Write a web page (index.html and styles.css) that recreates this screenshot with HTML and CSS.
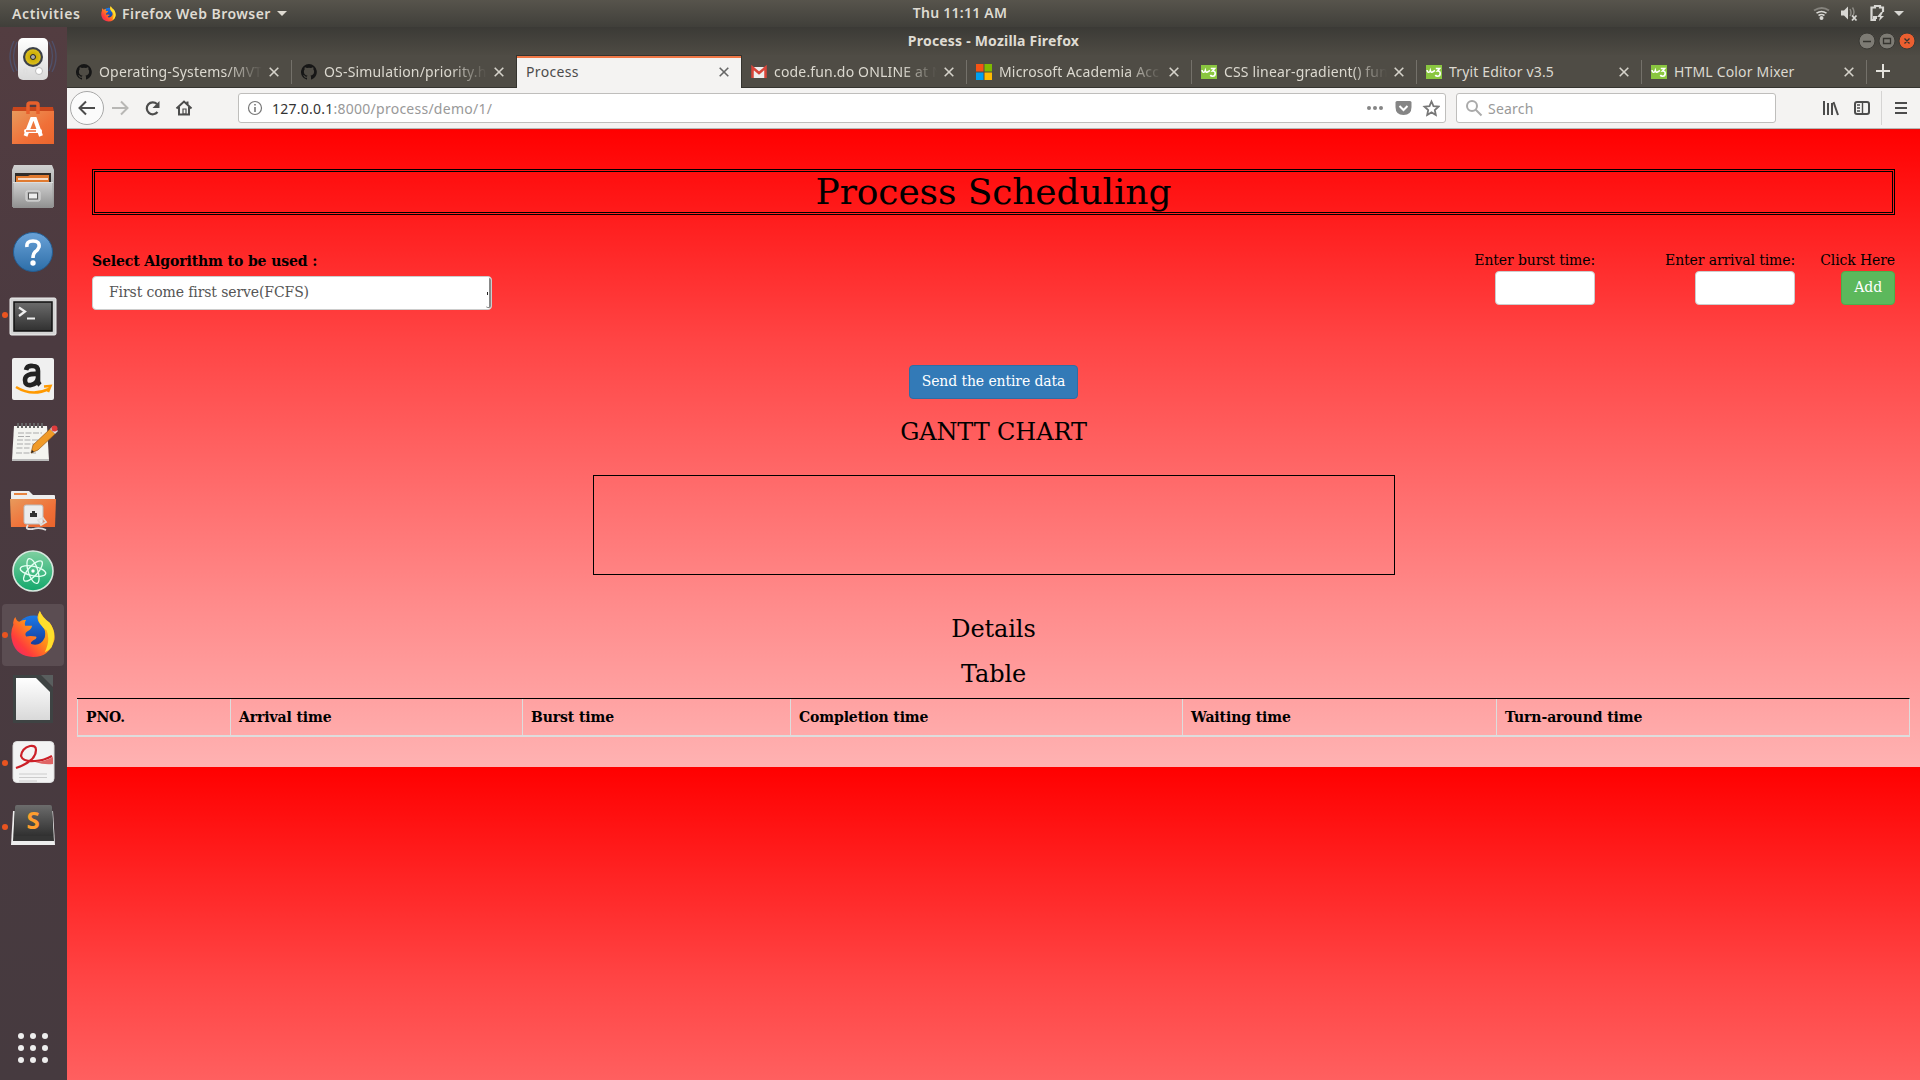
FILE: index.html
```html
<!DOCTYPE html>
<html lang="en">
<head>
<meta charset="utf-8">
<title>Process - Mozilla Firefox</title>
<link rel="stylesheet" href="styles.css">
</head>
<body>
<svg class="defs" width="0" height="0">
  <defs>
    <linearGradient id="white" x1="0" y1="0" x2="0" y2="1"><stop offset="0" stop-color="#fff"/><stop offset="1" stop-color="#d9d9d9"/></linearGradient>
    <linearGradient id="orange" x1="0" y1="0" x2="1" y2="1"><stop offset="0" stop-color="#e89a5c"/><stop offset=".6" stop-color="#f07038"/><stop offset="1" stop-color="#ea642c"/></linearGradient>
    <linearGradient id="grey" x1="0" y1="0" x2="0" y2="1"><stop offset="0" stop-color="#d0d0d0"/><stop offset="1" stop-color="#909090"/></linearGradient>
    <linearGradient id="blue" x1="0" y1="0" x2="0" y2="1"><stop offset="0" stop-color="#6aa2d8"/><stop offset="1" stop-color="#2d6ea8"/></linearGradient>
    <linearGradient id="dark" x1="0" y1="0" x2="0" y2="1"><stop offset="0" stop-color="#6c6c6c"/><stop offset="1" stop-color="#303030"/></linearGradient>
    <linearGradient id="green" x1="0" y1="0" x2="0" y2="1"><stop offset="0" stop-color="#7fd0a0"/><stop offset="1" stop-color="#12a86c"/></linearGradient>
    <linearGradient id="flame" x1="1" y1="0" x2="0" y2="1"><stop offset="0" stop-color="#ffe030"/><stop offset=".45" stop-color="#ff9018"/><stop offset=".75" stop-color="#ff3c3c"/><stop offset="1" stop-color="#e8207c"/></linearGradient>
    <linearGradient id="globe" x1="0" y1="0" x2="0" y2="1"><stop offset="0" stop-color="#1b7ae8"/><stop offset="1" stop-color="#152a84"/></linearGradient>
    <radialGradient id="cone"><stop offset="0" stop-color="#555"/><stop offset=".25" stop-color="#333"/><stop offset=".3" stop-color="#c8a800"/><stop offset="1" stop-color="#dcc020"/></radialGradient>
    <symbol id="firefox" viewBox="0 0 46 48">
      <circle cx="24" cy="24" r="19.500" fill="url(#globe)"/>
      <path d="M5 6Q6 10 9 11Q12 9 16 9Q14 12 15 15Q18 15 22 15Q22 18 17 21Q14 23 16 26Q20 25 26 26Q28 28 23 30Q19 33 22 34Q31 36 35 27Q37 18 30 13Q25 7 30 0Q33 7 40 12Q46 20 45 29Q40 47 23 47Q6 46 2 32Q-1 22 3 14Q2 9 5 6z" fill="url(#flame)"/>
      <path d="M30 0Q32 7 40 12Q48 23 42 37Q39 41 35 42Q41 30 37 20Q25 12 30 0z" fill="#ffdf2c"/>
    </symbol>
    <symbol id="github" viewBox="0 0 16 16"><path fill="#161616" d="M8 0a8 8 0 0 0-2.5 15.6c.4.1.5-.2.5-.4v-1.5c-2.200.5-2.700-1-2.700-1-.4-.9-.9-1.200-.9-1.200-.7-.5.1-.5.1-.5.8.1 1.200.8 1.200.8.7 1.300 1.900.9 2.300.7.1-.5.3-.9.5-1.100-1.800-.2-3.600-.9-3.600-4 0-.8.3-1.600.8-2.100-.1-.2-.4-1 .1-2.100 0 0 .7-.2 2.200.8a7.500 7.500 0 0 1 4 0c1.500-1 2.200-.8 2.200-.8.4 1.100.2 1.900.1 2.100.5.6.8 1.300.8 2.100 0 3.100-1.900 3.800-3.700 4 .3.300.6.8.6 1.500v2.200c0 .2.1.5.6.4A8 8 0 0 0 8 0z"/></symbol>
    <symbol id="w3" viewBox="0 0 16 14"><path fill="#8ac640" d="M0 0h16v14H0z"/><path d="M1 5Q1.500 8.500 4 6.500L4.300 5.500Q5 8.500 7.500 6.300L9 5.500" fill="none" stroke="#fff" stroke-width="1.600"/><path d="M9.800 3.500h3.800L11.500 6q2.700-.2 2.700 2.500 0 2.700-2.700 2.700-1.500 0-2.200-1.200" fill="none" stroke="#fff" stroke-width="1.600"/></symbol>
    <symbol id="close" viewBox="0 0 10 10"><path d="M.7.7l8.600 8.600M9.300.7L.7 9.300" fill="none" stroke="currentColor" stroke-width="1.600"/></symbol>
  </defs>
</svg>

<header class="panel">
  <span class="activities">Activities</span>
  <span class="app-menu"><svg width="15" height="16"><use href="#firefox"/></svg><b>Firefox Web Browser</b><i class="caret"></i></span>
  <span class="clock">Thu 11:11 AM</span>
  <svg class="status" width="100" height="27" fill="#d8d7d3">
    <g fill="none" stroke="#d8d7d3" stroke-width="2"><path d="M5 10.500q8-5 15 0" stroke="#85837d"/><path d="M7.500 13.200q5-3.500 10 0M9.500 15.500q3-2 6 0" stroke-width="1.600"/></g><circle cx="12.500" cy="18" r="2"/>
    <path d="M32 10.500h3l4-4v13l-4-4h-3z"/><path d="M41 9q2 4 0 7M43.500 7.500q3 4.500 0 9" fill="none" stroke="#8d8b85" stroke-width="1.400"/><path d="M43 15.500l4.500 5m0-5l-4.500 5" stroke="#d8d7d3" stroke-width="1.800"/>
    <path d="M67 20h-4.500V7.500H66V6h5v1.500h3V12" fill="none" stroke="#d8d7d3" stroke-width="2.200"/><path d="M64 16h4v3h-4zM72 12l-4 5h3l-1 4 5-5h-3l2-4z"/>
    <path d="M85 11h10l-5 5z"/>
  </svg>
</header>

<div class="desktop">
  <nav class="dock">
    <div class="slot"><svg width="67" height="64"><g fill="none" stroke="#4d618b" stroke-width="1.300" opacity=".55"><path d="M17 15q-7 14 0 29M14 14q-8 16 0 31M49 15q7 14 0 29M52 14q8 16 0 31"/></g><rect x="18" y="11" width="30" height="42" rx="5" fill="url(#white)"/><circle cx="33" cy="30" r="10" fill="#3c4048"/><circle cx="33" cy="30" r="7.800" fill="url(#cone)"/><circle cx="33" cy="30" r="2.500" fill="#aaa" stroke="#222" stroke-width="1"/><circle cx="39" cy="44" r="3.500" fill="#fff" stroke="#bbb"/><path d="M24 42h3v5h-3z" fill="none" stroke="#ddd"/></svg></div>
    <div class="slot"><svg width="67" height="64"><path d="M13 16h40l1 5H12z" fill="#c9461c"/><path d="M12 20h42v33H12z" fill="url(#orange)"/><path d="M28 23V14q0-2 2-2h6q2 0 2 2v9" fill="none" stroke="#e8602c" stroke-width="3.500"/><path d="M25.500 45l6.500-17h3l6 17" fill="none" stroke="#fff" stroke-width="4"/><rect x="24" y="38" width="18" height="4" rx="2" fill="#fff"/><path d="M26 40h10" stroke="#ee6a34" stroke-width="1.500"/></svg></div>
    <div class="slot"><svg width="67" height="64"><path d="M14 10h38l2 5v37H12V15z" fill="url(#grey)"/><path d="M15 18h36v9H15z" fill="#302c2a"/><path d="M16 21h12l2-1h19v7H16z" fill="#e07a30"/><path d="M18 24h30" stroke="#fff" stroke-width="1.500"/><path d="M14 27h38l1 26H13z" fill="url(#grey)"/><path d="M13 27.500h40" stroke="#ddd"/><rect x="26" y="36" width="14" height="10" rx="1.500" fill="#bbb" stroke="#ddd"/><rect x="28.500" y="38" width="9" height="6" fill="#eee" stroke="#555"/></svg></div>
    <div class="slot"><svg width="67" height="64"><circle cx="33" cy="33" r="19.500" fill="url(#blue)" stroke="#245d92"/><path d="M27 28q-1-6 6-6 7 0 6 6-1 3-4 5-2 2-2 6" fill="none" stroke="#fff" stroke-width="3.600"/><circle cx="33" cy="44" r="2.700" fill="#fff"/></svg></div>
    <div class="slot"><i class="running"></i><svg width="67" height="64"><rect x="10" y="15" width="46" height="37" rx="1.500" fill="#d4d4d4" stroke="#eee"/><rect x="14" y="19" width="38" height="29" fill="url(#dark)" stroke="#111" stroke-width="1.500"/><path d="M19 24.500l6 4-6 4.500M27 35.500h8" fill="none" stroke="#eee" stroke-width="2.200"/></svg></div>
    <div class="slot"><svg width="67" height="64"><rect x="12" y="11" width="42" height="42" rx="2" fill="#f0f0f0"/><path d="M26 23q1-5 7-4 5 0 5 5v10q0 2 2 4M38 27q-13-1-13 6 0 6 6 5 6-1 7-7" fill="none" stroke="#222" stroke-width="4.600"/><path d="M16 40q16 10 33 2M44 39.500l6.500-.5-2.500 6" fill="none" stroke="#ff9900" stroke-width="2.500"/></svg></div>
    <div class="slot"><svg width="67" height="64"><path d="M14 15h33l2 34H12z" fill="#f4f4f0"/><path d="M12 48h37v2H12z" fill="#bbb"/><path d="M18 12v5m4-5v5m4-5v5m4-5v5m4-5v5m4-5v5m4-5v5" stroke="#666" stroke-width="2"/><path d="M18 22h24M18 25.500h12M17 29h22M17 33h18M16.500 37h13M16 42h20" stroke="#aaa" stroke-dasharray="6 1.500"/><path d="M31 42l2-8 17-16 5 5-17 16z" fill="#f09a28" stroke="#9a5a18" stroke-width=".7"/><path d="M50 18l3-3 5 5-3 3z" fill="#ddd"/><circle cx="54.500" cy="17.500" r="3" fill="#e03c3c"/><path d="M31 42l1-3 2 2z" fill="#222"/></svg></div>
    <div class="slot"><svg width="67" height="64"><path d="M11 25V17q0-1 1-1h17l4 4h21q1 0 1 1v5z" fill="#eee"/><path d="M14 19h13" stroke="#e88440" stroke-width="2"/><path d="M10 24h46l-1 28H11z" fill="url(#orange)"/><rect x="24" y="30" width="19" height="19" rx="2" fill="#ececec" stroke="#bbb"/><path d="M30 42v-4h2v-2h3v2h2v4z" fill="#333"/><path d="M28 50q-4 5 5 4 7-2 13 1M38 45l5-2 3 4-5 3z" fill="none" stroke="#ddd" stroke-width="1.800"/></svg></div>
    <div class="slot"><svg width="67" height="64"><circle cx="33" cy="32" r="20" fill="url(#green)" stroke="#d8e8df" stroke-width="1.600"/><g fill="none" stroke="#e4fff2" stroke-width="1.300"><ellipse cx="33" cy="32" rx="13" ry="4.800" transform="rotate(12 33 32)"/><ellipse cx="33" cy="32" rx="13" ry="4.800" transform="rotate(72 33 32)"/><ellipse cx="33" cy="32" rx="13" ry="4.800" transform="rotate(132 33 32)"/></g><circle cx="33" cy="32" r="1.700" fill="#fff"/></svg></div>
    <div class="slot active"><i class="running"></i><svg width="67" height="64"><use href="#firefox" x="10" y="8" width="46" height="47"/></svg></div>
    <div class="slot"><svg width="67" height="64"><path d="M13 8h28l12 13v35H13z" fill="#3e4343"/><path d="M41 8h12v12z" fill="#595e5e"/><path d="M16 11h20l14 14v28H16z" fill="url(#white)"/></svg></div>
    <div class="slot"><i class="running"></i><svg width="67" height="64"><rect x="13" y="10.500" width="41" height="41" rx="4" fill="#f3f3f3" stroke="#ddd"/><path d="M16 37q20-7 20-18 0-5-6-4-8 2-9 10 2 6 14 5 8 0 17-5" fill="none" stroke="#cc2028" stroke-width="2.200"/><path d="M35 31q9 0 18-5v7q-9 1-18-2z" fill="#e06464"/><path d="M19 43h28M19 46.500h28M19 50h18" stroke="#ccc"/></svg></div>
    <div class="slot"><i class="running"></i><svg width="67" height="64"><path d="M13 16h40l2 34H11z" fill="#eee"/><path d="M15 11h37l2 35H13z" fill="#353535"/><path d="M15 12q0-2 2-2h33q2 0 2 2l1 29H14z" fill="url(#dark)"/><text x="33" y="34" class="sublime">S</text></svg></div>
    <div class="apps"><i></i><i></i><i></i><i></i><i></i><i></i><i></i><i></i><i></i></div>
  </nav>

  <main class="window">
    <div class="titlebar">
      <span class="title">Process - Mozilla Firefox</span>
      <svg class="controls" width="60" height="20"><g stroke="#3a3934"><circle cx="10" cy="10" r="8" fill="#7d7b74"/><circle cx="30" cy="10" r="8" fill="#7d7b74"/><circle cx="50" cy="10" r="8" fill="#ec5f30"/></g><path d="M6 10.500h8M26.500 7.500h7v5h-7zM47.500 7.500l5 5m0-5l-5 5" fill="none" stroke="#35342f" stroke-width="1.300"/></svg>
    </div>
    <div class="tabs">
      <div class="tab"><svg width="16" height="16"><use href="#github"/></svg><span class="fade">Operating-Systems/MVT</span><svg class="x" width="10" height="10"><use href="#close"/></svg></div>
      <div class="tab nosep"><svg width="16" height="16"><use href="#github"/></svg><span class="fade">OS-Simulation/priority.h</span><svg class="x" width="10" height="10"><use href="#close"/></svg></div>
      <div class="tab current nosep"><span>Process</span><svg class="x" width="10" height="10"><use href="#close"/></svg></div>
      <div class="tab"><svg width="16" height="16" viewBox="0 0 16 16"><path d="M1 3h14v11H1z" fill="#eee"/><path d="M1.500 14V3.500L8 9l6.500-5.500V14" fill="none" stroke="#d8453a" stroke-width="2.500"/></svg><span class="fade">code.fun.do ONLINE at N</span><svg class="x" width="10" height="10"><use href="#close"/></svg></div>
      <div class="tab"><svg width="16" height="16"><path fill="#f65314" d="M0 0h7.500v7.500H0z"/><path fill="#7fba00" d="M8.500 0H16v7.500H8.500z"/><path fill="#00a1f1" d="M0 8.500h7.500V16H0z"/><path fill="#ffbb00" d="M8.500 8.500H16V16H8.500z"/></svg><span class="fade">Microsoft Academia Acc</span><svg class="x" width="10" height="10"><use href="#close"/></svg></div>
      <div class="tab"><svg width="16" height="14"><use href="#w3"/></svg><span class="fade">CSS linear-gradient() fun</span><svg class="x" width="10" height="10"><use href="#close"/></svg></div>
      <div class="tab"><svg width="16" height="14"><use href="#w3"/></svg><span>Tryit Editor v3.5</span><svg class="x" width="10" height="10"><use href="#close"/></svg></div>
      <div class="tab"><svg width="16" height="14"><use href="#w3"/></svg><span>HTML Color Mixer</span><svg class="x" width="10" height="10"><use href="#close"/></svg></div>
      <svg class="plus" width="14" height="14"><path d="M7 0v14M0 7h14" stroke="#e4e2dc" stroke-width="2"/></svg>
    </div>
    <div class="toolbar">
      <svg class="buttons" width="171" height="40" fill="none" stroke="#4c4c4c" stroke-width="2"><circle cx="20" cy="20" r="16.500" fill="#fbfbfb" stroke="#a8a8a8" stroke-width="1"/><path d="M28 20H13m6-6.500L12.500 20l6.500 6.500"/><path d="M45 20h15m-6-6.500l6.500 6.500-6.500 6.500" stroke="#b8b7b5"/><path d="M90.500 24a6 6 0 1 1-.5-8" stroke-width="2.200"/><path d="M92.500 13v7h-7z" fill="#4c4c4c" stroke="none"/><path d="M109.500 20.500l7.500-7 7.500 7M112 19v7.500h10V19M120.500 13.500v3"/><path d="M116 21h3v5h-3z" stroke-width="1.200"/></svg>
      <div class="field url"><svg width="16" height="16" fill="none" stroke="#777"><circle cx="8" cy="8" r="6.500" stroke-width="1.200"/><path d="M8 7v5M8 4v1.600" stroke-width="1.600"/></svg><span class="address">127.0.0.1<em>:8000/process/demo/1/</em></span>
        <svg width="74" height="20"><g fill="#858585"><circle cx="3" cy="10" r="2"/><circle cx="9" cy="10" r="2"/><circle cx="15" cy="10" r="2"/><path d="M31 3h13q1.500 0 1.500 1.500V9q0 8-8 8t-8-8V4.500Q29.500 3 31 3z"/></g><path d="M33.500 8l4 4 4-4" fill="none" stroke="#fff" stroke-width="2"/><path d="M65.500 3.500l2 4.600 5 .5-3.700 3.400 1 5-4.300-2.600-4.300 2.600 1-5-3.700-3.400 5-.5z" fill="none" stroke="#777" stroke-width="1.800"/></svg></div>
      <div class="field search"><svg width="18" height="18" fill="none" stroke="#aaa" stroke-width="2"><circle cx="7" cy="7" r="5"/><path d="M10.500 10.500l6 6"/></svg><span>Search</span></div>
      <svg class="tools" width="100" height="40" fill="none" stroke="#4c4c4c" stroke-width="2"><path d="M4 13v14M8 15v12M12 15v12M13.500 14l4.500 13"/><rect x="35" y="14" width="14" height="12" rx="2"/><path d="M42.500 14v12M37 17h3M37 20h3M37 23h3" stroke-width="1.400"/><path d="M61.500 3v34" stroke="#d5d4d3" stroke-width="1"/><path d="M75 15h12M75 20h12M75 25h12"/></svg>
    </div>

    <section class="page">
      <div class="content">
        <h1>Process Scheduling</h1>
        <div class="form">
          <div class="algorithm"><label>Select Algorithm to be used :</label><div class="select"><span>First come first serve(FCFS)</span><i></i></div></div>
          <div class="entry burst"><span>Enter burst time:</span><div class="input"></div></div>
          <div class="entry arrival"><span>Enter arrival time:</span><div class="input"></div></div>
          <div class="entry add"><span>Click Here</span><div class="btn success">Add</div></div>
        </div>
        <div class="btn primary">Send the entire data</div>
        <h3 class="gantt-title">GANTT CHART</h3>
        <div class="gantt"></div>
        <h3 class="details">Details</h3>
        <h3 class="table-title">Table</h3>
      </div>
      <div class="table"><b>PNO.</b><b>Arrival time</b><b>Burst time</b><b>Completion time</b><b>Waiting time</b><b>Turn-around time</b></div>
    </section>
  </main>
</div>
</body>
</html>
```
FILE: styles.css
```css
* { box-sizing: border-box; }
html, body { margin: 0; height: 1080px; overflow: hidden; }
body { font-family: "Noto Sans", sans-serif; font-size: 14px; display: flex; flex-direction: column; white-space: nowrap; }
svg { display: block; flex: none; }
.defs { position: absolute; }

.panel { height: 27px; flex: none; display: grid; grid-template-columns: 1fr auto 1fr; grid-template-rows: 27px; align-items: center; background: linear-gradient(#57544c, #403f3a); color: #dfdbd2; font-weight: 600; }
.panel > * { grid-row: 1; }
.activities { grid-column: 1; margin-left: 12px; letter-spacing: .6px; }
.app-menu { grid-column: 1; margin-left: 101px; display: flex; align-items: center; gap: 6px; }
.app-menu b { font-weight: 600; letter-spacing: .45px; }
.caret { border: 5px solid transparent; border-top-color: #dfdbd2; border-bottom: 0; }
.clock { grid-column: 2; letter-spacing: .25px; margin-top: -2px; }
.status { grid-column: 3; justify-self: end; margin-right: 11px; }

.desktop { display: flex; height: 1053px; }
.dock { width: 67px; flex: none; display: flex; flex-direction: column; background: linear-gradient(#533d41, #4b3a40 30%, #463a3f); }
.slot { height: 64px; position: relative; }
.slot.active::before { content: ""; position: absolute; left: 2px; top: 1px; width: 62px; height: 62px; border-radius: 4px; background: #5b4d52; }
.slot svg { position: relative; }
.running { position: absolute; left: 2px; top: 29px; width: 6px; height: 6px; border-radius: 50%; background: #e95420; z-index: 1; }
.sublime { font: bold 24px "Open Sans", sans-serif; fill: #ff9d2e; text-anchor: middle; }
.apps { margin: auto 0 17px 18px; display: grid; grid-template-columns: repeat(3, 6px); gap: 6px; }
.apps i { height: 6px; border-radius: 50%; background: #eee; }

.window { flex: 1; display: flex; flex-direction: column; min-width: 0; }
.titlebar { height: 28px; display: grid; grid-template-columns: 1fr auto 1fr; align-items: center; background: linear-gradient(#3b3a36, #4e4b44); color: #dfdbd2; font-weight: 700; }
.title { grid-column: 2; letter-spacing: .2px; margin-top: -2px; }
.controls { justify-self: end; margin-right: 3px; }
.tabs { height: 33px; display: flex; background: #4f4c45; border-bottom: 1px solid #35342f; color: #dcd9d0; letter-spacing: .17px; }
.tab { width: 225px; flex: none; display: flex; align-items: center; padding: 1px 13px 0 9px; position: relative; gap: 7px; }
.tab::after { content: ""; position: absolute; right: 0; top: 5px; width: 1px; height: 24px; background: #74716a; }
.tab.nosep::after { display: none; }
.tab span { width: 163px; overflow: hidden; line-height: 24px; }
.tab .x { margin-left: auto; color: #d5d2ca; }
.fade { -webkit-mask-image: linear-gradient(90deg, #000 78%, transparent); mask-image: linear-gradient(90deg, #000 78%, transparent); }
.tab.current { height: 33px; width: 226px; margin-left: -1px; padding-left: 10px; background: #f4f3f2; color: #4c4c4c; letter-spacing: .35px; box-shadow: inset 0 1px #35342f, inset 1px 0 #35342f, inset -1px 0 #35342f, inset 0 3px #f07746; }
.current .x { color: #666; }
.plus { margin: 9px 0 0 9px; }
.toolbar { height: 41px; background: #f4f3f2; border-bottom: 1px solid #b8b7b5; display: flex; align-items: center; }
.field { height: 30px; background: #fff; border: 1px solid #bfbebc; border-radius: 3px; display: flex; align-items: center; color: #999; }
.url { width: 1208px; padding: 0 5px 0 8px; }
.address { margin-left: 9px; color: #333; flex: 1; letter-spacing: .25px; }
.address em { font-style: normal; color: #999; }
.search { width: 320px; margin-left: 10px; padding-left: 8px; gap: 5px; letter-spacing: .2px; }
.tools { margin-left: auto; }

.page { flex: 1; font-family: "DejaVu Serif", serif; letter-spacing: -.11px; color: #000; line-height: 20px; background: linear-gradient(#f00, #ff4444 33%, #ff8a8a 74%, #ffb2b2) 0 0 / 100% 638px; box-shadow: inset 0 1px #e01010; }
.content { padding: 40px 25px 0; display: flex; flex-direction: column; align-items: center; }
h1, h3 { font-weight: 400; margin: 0; }
h1 { align-self: stretch; height: 46px; border: 1px solid #000; outline: 1px solid #000; outline-offset: -3px; padding-top: 2px; line-height: 40px; text-align: center; font-size: 36px; }
.form { align-self: stretch; display: flex; margin-top: 35px; height: 115px; }
.algorithm { width: 400px; margin-right: auto; padding-top: 1px; }
label { display: block; font-weight: 700; margin-bottom: 5px; }
.select, .input { height: 34px; background: #fff; border: 1px solid #ccc; border-radius: 4px; }
.select { color: #555; padding: 5px 16px; position: relative; }
.select i { position: absolute; right: 0; top: 1px; width: 5px; height: 30px; border-right: 2px solid #888; border-bottom: 1px solid #888; border-radius: 2px; background: linear-gradient(#222, #222) 1px 14px / 1px 3px no-repeat; }
.entry { display: flex; flex-direction: column; align-items: flex-end; gap: 1px; }
.arrival { width: 200px; }
.add { width: 100px; }
.input { width: 100px; }
.btn { height: 34px; padding: 5px 12px; border: 1px solid; border-radius: 4px; color: #fff; }
.success { background: #5cb85c; border-color: #4cae4c; }
.primary { background: #337ab7; border-color: #2e6da4; }
h3 { font-size: 24px; line-height: 26px; }
.gantt-title { margin-top: 20px; }
.gantt { width: 802px; height: 100px; border: 1px solid #000; margin-top: 30px; }
.details { margin-top: 41px; }
.table-title { margin-top: 19px; }
.table { margin: 11px 10px 0; height: 39px; border-top: 1px solid #000; border-bottom: 2px solid #ddd; border-right: 1px solid #ddd; display: grid; grid-template-columns: 153px 292px 268px 392px 314px 1fr; }
.table b { border-left: 1px solid #ddd; padding: 8px; }
```
